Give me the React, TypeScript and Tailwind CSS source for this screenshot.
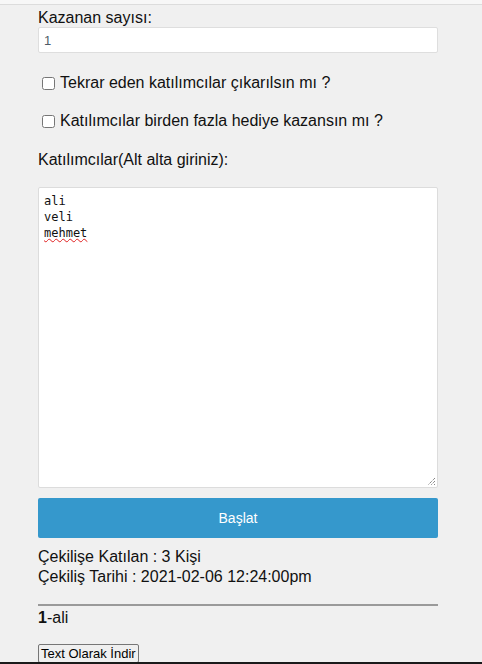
export default function App() {
  return (
    <div className="h-[664px] overflow-hidden bg-[#f0f0f0] border-b-2 border-[#1a1a1a] font-['Liberation_Sans',Arial,sans-serif] text-[#111]">
      <div className="h-[5px] bg-[#f7f7f7] border-b border-[#dcdcdc]" />

      <div className="ml-[38px] w-[400px]">
        <div className="mt-[3px] h-[19px] text-[16px] leading-[19px]">Kazanan sayısı:</div>
        <input
          type="text"
          defaultValue="1"
          className="block w-[400px] h-[26px] bg-white border border-[#dedede] rounded-[2px] px-[5px] font-['Liberation_Sans',Arial,sans-serif] text-[13px] text-[#4f5b68] outline-none"
        />

        <label className="mt-[20px] flex items-center h-[20px] text-[16px]">
          <input type="checkbox" className="ml-[4px] mr-[5px] w-[13px] h-[13px]" />
          <span>Tekrar eden katılımcılar çıkarılsın mı ?</span>
        </label>
        <label className="mt-[18px] flex items-center h-[20px] text-[16px]">
          <input type="checkbox" className="ml-[4px] mr-[5px] w-[13px] h-[13px]" />
          <span>Katılımcılar birden fazla hediye kazansın mı ?</span>
        </label>

        <div className="mt-[19px] h-[20px] text-[16px] leading-[20px]">Katılımcılar(Alt alta giriniz):</div>

        <div className="relative mt-[17px] h-[301px] bg-white border border-[#dcdcdc] rounded-[2px] px-[5px] pt-[5px] font-['DejaVu_Sans_Mono',monospace] text-[12px] leading-[16px] text-[#111]">
          <div>ali</div>
          <div>veli</div>
          <div className="underline decoration-wavy decoration-[#e02020] decoration-1 underline-offset-[1px]">mehmet</div>
          <svg className="absolute right-[1px] bottom-[1px]" width="10" height="10" viewBox="0 0 10 10">
            <path d="M9 2 L2 9 M9 5 L5 9 M9 8 L8 9" stroke="#555" strokeWidth="1" strokeDasharray="1 1" />
          </svg>
        </div>

        <button className="mt-[10px] w-[400px] h-[40px] bg-[#3598cc] rounded-[2px] text-white text-[14px]">
          Başlat
        </button>

        <div className="mt-[9px] text-[16px] leading-[20px]">
          <div>Çekilişe Katılan : 3 Kişi</div>
          <div>Çekiliş Tarihi : 2021-02-06 12:24:00pm</div>
        </div>

        <hr className="mt-[17px] border-t-2 border-[#9a9a9a]" />

        <div className="mt-[2px] h-[20px] text-[16px] leading-[20px]">
          <b>1</b>-ali
        </div>

        <button className="mt-[16px] block h-[19px] px-[2px] bg-[#efefef] border border-[#767676] rounded-[2px] text-[13px] leading-[15px] text-black">
          Text Olarak İndir
        </button>
      </div>
    </div>
  )
}
